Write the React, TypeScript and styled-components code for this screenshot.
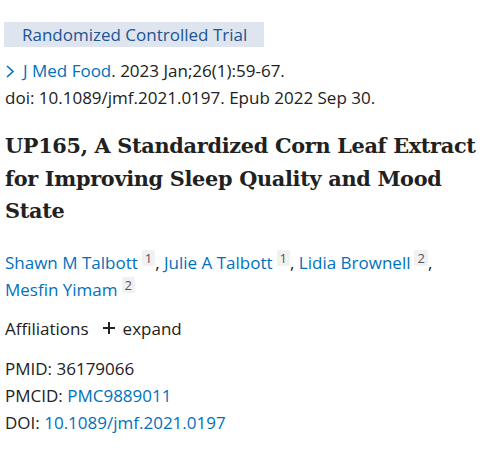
import React from "react";
import styled, { createGlobalStyle } from "styled-components";

const GlobalStyle = createGlobalStyle`
  body {
    margin: 0;
    background: #ffffff;
    font-family: "Open Sans", "Noto Sans", sans-serif;
    color: #212121;
  }
`;

const Page = styled.div`
  width: 490px;
  height: 452px;
  padding: 22px 0 0 5px;
  box-sizing: border-box;
  overflow: hidden;
`;

const TypeBadge = styled.div`
  display: inline-block;
  background: #dfe5ef;
  color: #205493;
  font-size: 17px;
  line-height: 25px;
  padding: 0 17px 0 18px;
  margin-left: -1px;
`;

const Citation = styled.div`
  font-size: 17px;
  line-height: 27px;
  margin-top: 10px;
`;

const JournalLink = styled.a`
  color: #0071bc;
  text-decoration: none;
`;

const Chevron = styled.svg`
  width: 10px;
  height: 13px;
  margin-right: 8px;
  vertical-align: -1px;
`;

const Title = styled.h1`
  font-family: "DejaVu Serif", serif;
  font-weight: bold;
  font-size: 20.8px;
  line-height: 32.5px;
  margin: 19px 0 0;
  color: #212121;
  letter-spacing: -0.3px;
`;

const Authors = styled.div`
  font-size: 17px;
  line-height: 27px;
  margin-top: 21px;
  width: 440px;
`;

const AuthorLink = styled.a`
  color: #0071bc;
  text-decoration: none;
`;

const Sup = styled.span`
  display: inline-block;
  background: #f1f1f1;
  color: #555;
  font-size: 13px;
  line-height: 16px;
  padding: 0 3px;
  margin-left: 4px;
  vertical-align: 6px;
  border-radius: 2px;
`;

const Affiliations = styled.div`
  font-size: 17px;
  line-height: 27px;
  margin-top: 12px;
  display: flex;
  align-items: center;
  gap: 13px;
`;

const Expand = styled.span`
  display: inline-flex;
  align-items: center;
  gap: 7px;
  color: #212121;
`;

const Identifiers = styled.div`
  margin-top: 13px;
  font-size: 17px;
  line-height: 27px;
`;

const IdLink = styled.a`
  color: #0071bc;
  text-decoration: none;
`;

const authors = [
  { name: "Shawn M Talbott", aff: 1 },
  { name: "Julie A Talbott", aff: 1 },
  { name: "Lidia Brownell", aff: 2 },
  { name: "Mesfin Yimam", aff: 2 },
];

export default function App() {
  return (
    <Page>
      <GlobalStyle />
      <TypeBadge>Randomized Controlled Trial</TypeBadge>
      <Citation>
        <Chevron viewBox="0 0 10 13">
          <path d="M2 1 L8 6.5 L2 12" fill="none" stroke="#0071bc" strokeWidth="1.6" />
        </Chevron>
        <JournalLink href="#">J Med Food</JournalLink>. 2023 Jan;26(1):59-67.
        <br />
        doi: 10.1089/jmf.2021.0197. Epub 2022 Sep 30.
      </Citation>
      <Title>
        UP165, A Standardized Corn Leaf Extract for Improving Sleep Quality and Mood State
      </Title>
      <Authors>
        {authors.map((a, i) => (
          <React.Fragment key={a.name}>
            <AuthorLink href="#">{a.name}</AuthorLink>
            <Sup>{a.aff}</Sup>
            {i < authors.length - 1 ? ", " : ""}
          </React.Fragment>
        ))}
      </Authors>
      <Affiliations>
        Affiliations
        <Expand>
          <svg width="14" height="14" viewBox="0 0 14 14">
            <path d="M7 1 V13 M1 7 H13" stroke="#212121" strokeWidth="2" />
          </svg>
          expand
        </Expand>
      </Affiliations>
      <Identifiers>
        <div>PMID: 36179066</div>
        <div>
          PMCID: <IdLink href="#">PMC9889011</IdLink>
        </div>
        <div>
          DOI: <IdLink href="#">10.1089/jmf.2021.0197</IdLink>
        </div>
      </Identifiers>
    </Page>
  );
}
